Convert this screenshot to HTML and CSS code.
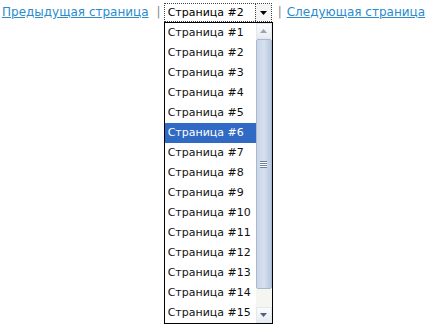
FILE: index.html
```html
<!DOCTYPE html>
<html lang="ru">
<head>
    <meta charset="UTF-8">
    <title>Страницы</title>
    <link rel="stylesheet" href="styles.css">
</head>
<body>
<div class="pager">
    <a href="#" class="page-link prev">Предыдущая страница</a>
    <span class="sep">|</span>
    <div class="select-wrap">
        <div class="select">
            <span class="select-value">Страница #2</span>
            <span class="select-btn">
                <svg width="7" height="4" viewBox="0 0 7 4"><path d="M0 0H7L3.5 4Z" fill="#000"/></svg>
            </span>
        </div>
        <!-- open dropdown list -->
        <div class="dropdown">
            <ul class="options">
                <li>Страница #1</li>
                <li>Страница #2</li>
                <li>Страница #3</li>
                <li>Страница #4</li>
                <li>Страница #5</li>
                <li class="selected">Страница #6</li>
                <li>Страница #7</li>
                <li>Страница #8</li>
                <li>Страница #9</li>
                <li>Страница #10</li>
                <li>Страница #11</li>
                <li>Страница #12</li>
                <li>Страница #13</li>
                <li>Страница #14</li>
                <li>Страница #15</li>
            </ul>
            <div class="scrollbar">
                <div class="sb-btn">
                    <svg width="7" height="4" viewBox="0 0 7 4"><path d="M3.5 0L7 4H0Z" fill="#9aa3b0"/></svg>
                </div>
                <div class="sb-thumb">
                    <span class="grip"></span>
                </div>
                <div class="sb-track"></div>
                <div class="sb-btn">
                    <svg width="7" height="4" viewBox="0 0 7 4"><path d="M0 0H7L3.5 4Z" fill="#4d6185"/></svg>
                </div>
            </div>
        </div>
    </div>
    <span class="sep">|</span>
    <a href="#" class="page-link next">Следующая страница</a>
</div>
</body>
</html>
```

FILE: styles.css
```css
/* General Styles */
body {
    margin: 0;
    padding: 3px 0 0 2px;
    background-color: #fff;
    font-family: "DejaVu Sans", Verdana, sans-serif;
    font-size: 12px;
    color: #000;
}

.pager {
    display: flex;
    align-items: flex-start;
}

.page-link {
    color: #2a8ccd;
    text-decoration: underline;
    white-space: nowrap;
    flex-shrink: 0;
    line-height: 19px;
}

.page-link.prev {
    margin-right: 3px;
}

.page-link.next {
    margin-left: 2px;
}

.sep {
    color: #888;
    margin: 0 3px 0 5px;
    line-height: 19px;
    flex-shrink: 0;
}

/* Fake select */
.select-wrap {
    display: flex;
    flex-direction: column;
    flex-shrink: 0;
    width: 109px;
}

.select {
    display: flex;
    width: 108px;
    height: 19px;
    box-sizing: border-box;
    border: 1px dotted #444;
    font-size: 11px;
}

.select-value {
    flex: 1;
    padding: 2px 0 0 3px;
    white-space: nowrap;
}

.select-btn {
    width: 15px;
    display: flex;
    align-items: center;
    justify-content: center;
    border-left: 1px dotted #444;
    background-color: #f4f4f4;
}

.dropdown {
    width: 109px;
    height: 302px;
    box-sizing: border-box;
    border: 1px solid #000;
    background-color: #fff;
    display: flex;
    font-size: 11px;
}

.options {
    list-style: none;
    margin: 0;
    padding: 0;
    flex: 1;
}

.options li {
    height: 20px;
    line-height: 20px;
    padding-left: 3px;
    white-space: nowrap;
    color: #111;
}

.options li.selected {
    background-color: #316ac5;
    color: #fff;
}

/* Scrollbar */
.scrollbar {
    width: 16px;
    display: flex;
    flex-direction: column;
    background-color: #f5f5f1;
}

.sb-btn {
    height: 16px;
    display: flex;
    align-items: center;
    justify-content: center;
    background: linear-gradient(#fbfbfb, #e8ecf1);
    border: 1px solid #e3e7ee;
    box-sizing: border-box;
}

.sb-thumb {
    height: 250px;
    display: flex;
    align-items: center;
    justify-content: center;
    background: linear-gradient(90deg, #c9d6e8, #d6e0ee 50%, #b8c8df);
    border: 1px solid #a9b8cf;
    border-radius: 2px;
    box-sizing: border-box;
}

.grip {
    width: 7px;
    height: 5px;
    border-top: 1px solid #6c7f9e;
    border-bottom: 1px solid #6c7f9e;
    background: linear-gradient(#fff 0 1px, #6c7f9e 1px 2px, #fff 2px 3px, #6c7f9e 3px 4px, #fff 4px);
}

.sb-track {
    flex: 1;
}
```
